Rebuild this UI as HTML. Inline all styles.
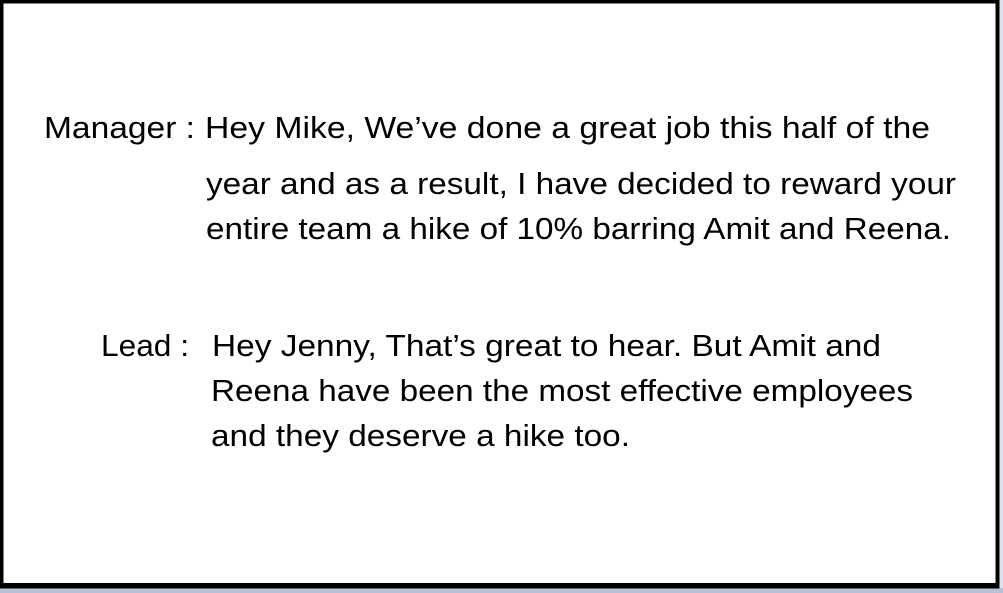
<!DOCTYPE html>
<html><head><style>
html,body{margin:0;padding:0;background:#fff;width:1003px;height:593px;overflow:hidden}
</style></head><body>
<svg width="1003" height="593" xmlns="http://www.w3.org/2000/svg" style="position:absolute;left:0;top:0">
<rect x="0" y="0" width="1003" height="593" fill="#fff"/>
<rect x="999" y="0" width="4" height="593" fill="#dde3ee"/>
<rect x="0" y="588" width="1003" height="5" fill="#b8c2d6"/>
<rect x="1.5" y="1.5" width="996" height="585" fill="none" stroke="#000" stroke-width="4"/>
<rect x="0" y="583" width="999" height="5" fill="#000"/>
<g font-family="Liberation Sans, sans-serif" font-size="31" fill="#000">
<text x="44" y="138" textLength="151" lengthAdjust="spacingAndGlyphs">Manager :</text>
<text x="205" y="138" textLength="725" lengthAdjust="spacingAndGlyphs">Hey Mike, We’ve done a great job this half of the</text>
<text x="206" y="194" textLength="750" lengthAdjust="spacingAndGlyphs">year and as a result, I have decided to reward your</text>
<text x="206" y="239" textLength="745" lengthAdjust="spacingAndGlyphs">entire team a hike of 10% barring Amit and Reena.</text>
<text x="101" y="356" textLength="88" lengthAdjust="spacingAndGlyphs">Lead :</text>
<text x="212" y="356" textLength="669" lengthAdjust="spacingAndGlyphs">Hey Jenny, That’s great to hear. But Amit and</text>
<text x="211" y="401" textLength="702" lengthAdjust="spacingAndGlyphs">Reena have been the most effective employees</text>
<text x="211" y="446" textLength="419" lengthAdjust="spacingAndGlyphs">and they deserve a hike too.</text>
</g>
</svg>
</body></html>
